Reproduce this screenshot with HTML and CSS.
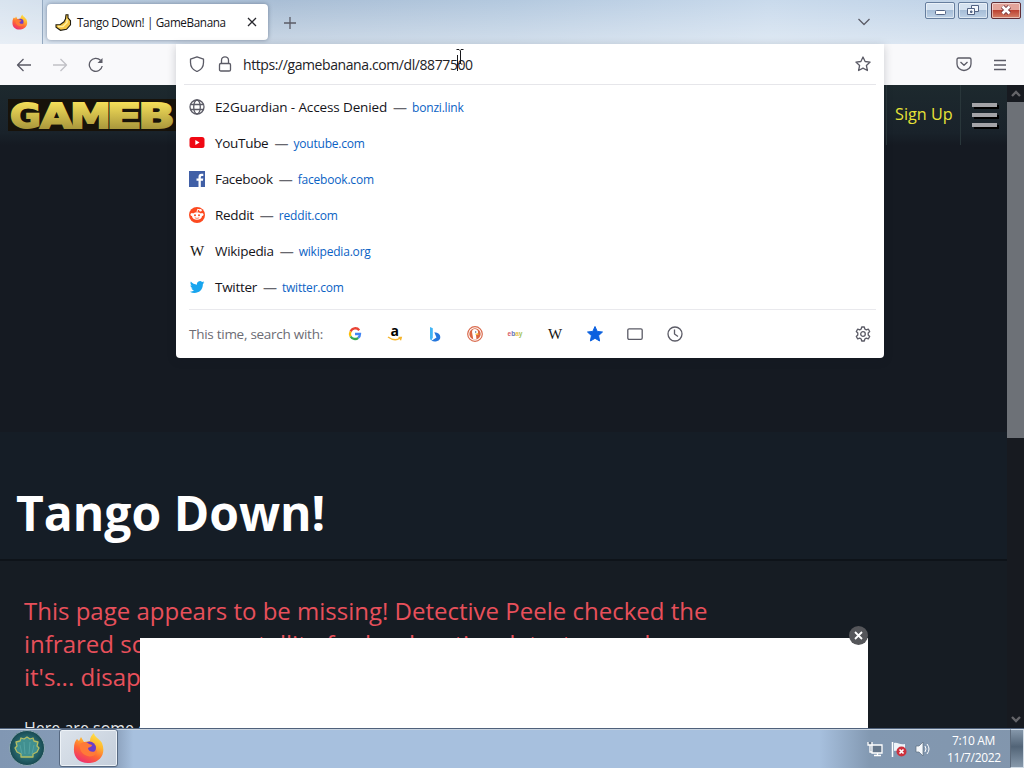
FILE: index.html
```
<!DOCTYPE html>
<html lang="en">
  <head>
    <meta charset="utf-8">
    <title>Tango Down! | GameBanana</title>
    <link rel="stylesheet" href="styles.css">
  </head>
  <body>
    <div class="screen">
      <div class="tabbar">
        <div class="pinned">
          <svg width="16" height="16" viewBox="0 0 32 32"><use href="#firefox"/></svg>
        </div>
        <div class="tab">
          <svg class="favicon" width="17" height="17" viewBox="0 0 17 17">
            <path d="M11 .8h2v3l2.500 3v4l-4 4.500-6 1-4.500-3v-2.500h4l4-3 1.500-3z" fill="#f6c643" stroke="#201c10" stroke-width="1.1"/>
            <path d="M3 12.500h5l4-4V5" fill="none" stroke="#fff0a0" stroke-width="1.5"/>
          </svg>
          <span class="tab-title">Tango Down! | GameBanana</span>
          <svg width="10" height="10" viewBox="0 0 10 10" class="line tab-x"><path d="M1 1l8 8M9 1l-8 8"/></svg>
        </div>
        <svg class="line new-tab" width="12" height="12" viewBox="0 0 12 12"><path d="M6 0v12M0 6h12"/></svg>
        <svg class="line tab-list" width="12" height="8" viewBox="0 0 12 8"><path d="M.5 1L6 6.500 11.500 1"/></svg>
        <div class="window-buttons">
          <div class="win-btn">
            <svg width="30" height="16" viewBox="0 0 30 16"><rect x="10.500" y="8.500" width="10" height="4" rx="1" fill="#fff" stroke="#536383"/></svg>
          </div>
          <div class="win-btn">
            <svg width="30" height="16" viewBox="0 0 30 16" fill="#f5f8fc" stroke="#536383">
              <path d="M13.500 3.500h7v6h-7z"/><path d="M9.500 6.500h7v6h-7z"/><path d="M12.500 9h1.500v1.500h-1.500z" fill="#7d94b5"/>
            </svg>
          </div>
          <div class="win-btn win-close">
            <svg width="30" height="16" viewBox="0 0 30 16" fill="none">
              <path d="M11.500 4.500l7 7M18.500 4.500l-7 7" stroke="#713239" stroke-width="4.500"/>
              <path d="M11.500 4.500l7 7M18.500 4.500l-7 7" stroke="#fff" stroke-width="2.700"/>
            </svg>
          </div>
        </div>
      </div>

      <div class="toolbar">
        <svg class="line" width="16" height="16" viewBox="0 0 16 16"><path d="M15 8H1.500M7.500 2l-6 6 6 6"/></svg>
        <svg class="line faded" width="16" height="16" viewBox="0 0 16 16"><path d="M1 8h13.500M8.500 2l6 6-6 6"/></svg>
        <svg class="line" width="16" height="16" viewBox="0 0 16 16"><path d="M14.200 9A6.500 6.500 0 1 1 12.500 3.300"/><path d="M14.500 1v5h-5z" fill="#5b5b66" stroke="none"/></svg>
        <svg class="line pocket" width="16" height="16" viewBox="0 0 16 16"><path d="M2.500 2h11Q15 2 15 3.500V8a7 6.500 0 0 1-14 0V3.500Q1 2 2.500 2zM4.500 6L8 9.300 11.500 6"/></svg>
        <svg class="line" width="14" height="14" viewBox="0 0 14 14"><path d="M1 2.500h12M1 7h12M1 11.500h12"/></svg>
      </div>

      <div class="page">
        <div class="content">
          <div class="site-nav">
            <svg class="logo" width="168" height="34" viewBox="0 0 168 34">
              <defs>
                <linearGradient id="gold" gradientUnits="userSpaceOnUse" x1="0" y1="3" x2="0" y2="30">
                  <stop offset="0" stop-color="#f5df59"/><stop offset="1" stop-color="#a9973c"/>
                </linearGradient>
              </defs>
              <rect width="168" height="32" fill="#17120a"/>
              <text x="2" y="28.500" textLength="31" lengthAdjust="spacingAndGlyphs">G</text>
              <text x="32" y="28.500" textLength="33" lengthAdjust="spacingAndGlyphs">A</text>
              <text x="62" y="28.500" textLength="41" lengthAdjust="spacingAndGlyphs">M</text>
              <text x="98" y="28.500" textLength="36" lengthAdjust="spacingAndGlyphs">E</text>
              <text x="130" y="28.500" textLength="37" lengthAdjust="spacingAndGlyphs">B</text>
            </svg>
            <div class="sign-up">Sign Up</div>
            <div class="nav-menu"><i></i><i></i><i></i></div>
          </div>
          <div class="banner"></div>
          <div class="heading"><h1>Tango Down!</h1></div>
          <div class="message">
            <p class="missing">This page appears to be missing! Detective Peele checked the<br>infrared scanners, satellite for her locative detector, and<br>it's... disappeared.</p>
            <p class="suggest">Here are some other</p>
          </div>
        </div>
        <div class="scrollbar">
          <svg width="10" height="17" viewBox="0 0 10 17"><path d="M1 11l4-4 4 4"/></svg>
          <div class="thumb"></div>
          <svg width="10" height="17" viewBox="0 0 10 17"><path d="M1 6l4 4 4-4"/></svg>
        </div>
      </div>

      <div class="taskbar">
        <svg class="start" width="38" height="38" viewBox="0 0 38 38">
          <circle cx="19" cy="19" r="17.500" fill="url(#orb)" stroke="#8fa9b4"/>
          <path d="M13 28h12v-3l4-2 2-4-2-2 1-4-4-1-1-3-3 1-3-2-3 2-3-1-1 3-4 1 1 4-2 2 2 4 4 2z" fill="#419090" stroke="#b5bd62" stroke-width="1.300" stroke-linejoin="round"/>
          <path d="M14 25l-2-9M17 25l-1-12M21 25l1-12M24 25l2-9" stroke="#55a3a2" fill="none"/>
        </svg>
        <div class="task">
          <svg width="32" height="32" viewBox="0 0 32 32"><use href="#firefox"/></svg>
        </div>
        <div class="tray">
          <svg width="16" height="16" viewBox="0 0 16 16" fill="#66788c" stroke="#fff" stroke-width="1.300">
            <path d="M5 4h10v8H5zM7 14.500h7M10.500 12v2M1 1v3h4V1M3 4v7h2" />
          </svg>
          <svg width="16" height="16" viewBox="0 0 16 16">
            <path d="M1.500 1v15" stroke="#fff" stroke-width="1.500"/><path d="M3 2c4-1 5 2 11 1v8c-5 1-7-2-11-1z" fill="#eef3f8"/>
            <circle cx="10.500" cy="10.500" r="5" fill="#cd303c"/><path d="M8.500 8.500l4 4M12.500 8.500l-4 4" stroke="#fff" stroke-width="1.700"/>
          </svg>
          <svg width="16" height="16" viewBox="0 0 16 16" fill="none" stroke="#fff">
            <path d="M1 5h3l4-4v14l-4-4H1z" fill="#f4f7fa" stroke="#5d6d80" stroke-width=".7"/><path d="M10 5q2 3 0 6M12 3q4 5 0 10"/>
          </svg>
        </div>
        <div class="clock"><span>7:10 AM</span><span>11/7/2022</span></div>
        <div class="show-desktop"></div>
      </div>

      <div class="ad">
        <div class="ad-close"><svg width="9" height="9" viewBox="0 0 9 9"><path d="M1 1l7 7M8 1L1 8" stroke="#fff" stroke-width="1.800"/></svg></div>
      </div>

      <div class="urlbar">
        <div class="url-input">
          <svg class="line" width="16" height="16" viewBox="0 0 16 16"><path d="M8 .8l6.500 2.400v3.300C14.500 11 12 14 8 15.500 4 14 1.500 11 1.500 6.500V3.200z"/></svg>
          <svg class="line" width="16" height="16" viewBox="0 0 16 16"><rect x="2.500" y="7.500" width="11" height="7.500" rx="1.300"/><path d="M4.500 7.500V4.300a3.500 3.500 0 0 1 7 0v3.200"/></svg>
          <span class="url">https://gamebanana.com/dl/8877500</span>
          <svg class="line" width="16" height="16" viewBox="0 0 16 16"><path d="M8 1l2.100 4.500 5 .6-3.700 3.400 1 5L8 12.100l-4.400 2.400 1-5L.9 6.100l5-.6z"/></svg>
        </div>
        <div class="results">
          <div class="result">
            <svg class="line" width="16" height="16" viewBox="0 0 16 16"><circle cx="8" cy="8" r="7"/><ellipse cx="8" cy="8" rx="3.300" ry="7"/><path d="M1.500 5.500h13M1.500 10.500h13"/></svg>
            <span class="name wide">E2Guardian - Access Denied</span><span class="dash">—</span><span class="link">bonzi.link</span>
          </div>
          <div class="result">
            <svg width="16" height="16" viewBox="0 0 16 16"><rect x=".5" y="2" width="15" height="11" rx="2.500" fill="#f00813"/><path d="M6.300 5v5l4.200-2.500z" fill="#fff"/></svg>
            <span class="name">YouTube</span><span class="dash">—</span><span class="link">youtube.com</span>
          </div>
          <div class="result">
            <svg width="16" height="16" viewBox="0 0 16 16"><path d="M0 0h16v16H0z" fill="#405fa6"/><path d="M9.500 16V9.800h-2V7.500h2V6q0-3.200 3-3.200h1.800V5H13q-1.200 0-1.200 1.200v1.300h2.500l-.4 2.300h-2.100V16z" fill="#fff"/></svg>
            <span class="name">Facebook</span><span class="dash">—</span><span class="link">facebook.com</span>
          </div>
          <div class="result">
            <svg width="16" height="16" viewBox="0 0 16 16"><circle cx="8" cy="8" r="8" fill="#fc4a20"/><path d="M8 5l.6-2.700 2.400.6" fill="none" stroke="#fff"/><circle cx="11.500" cy="3.200" r="1.200" fill="#fff"/><circle cx="3" cy="7.500" r="1.500" fill="#fff"/><circle cx="13" cy="7.500" r="1.500" fill="#fff"/><ellipse cx="8" cy="9" rx="5" ry="3.800" fill="#fff"/><circle cx="6" cy="8.300" r="1" fill="#fc4a20"/><circle cx="10" cy="8.300" r="1" fill="#fc4a20"/><path d="M5.800 10.800q2.200 1.200 4.400 0" fill="none" stroke="#fc4a20" stroke-width=".7"/></svg>
            <span class="name">Reddit</span><span class="dash">—</span><span class="link">reddit.com</span>
          </div>
          <div class="result">
            <span class="wiki">W</span>
            <span class="name">Wikipedia</span><span class="dash">—</span><span class="link">wikipedia.org</span>
          </div>
          <div class="result">
            <svg width="16" height="16" viewBox="0 0 24 24"><path fill="#18a5ee" d="M23 5c-.8.4-1.600.6-2.500.7.9-.6 1.600-1.400 1.900-2.400-.8.5-1.800.9-2.800 1.100A4.500 4.500 0 0 0 12 8.500C8.200 8.300 5 6.500 2.800 3.800c-1.100 2-.6 4.600 1.400 6-.7 0-1.400-.2-2-.5 0 2.200 1.500 4.100 3.500 4.500-.6.200-1.300.2-2 .1.600 1.800 2.200 3.100 4.200 3.100A9 9 0 0 1 1.200 19c9 5.300 20.100-.5 19.600-11.400C21.700 6.900 22.400 6 23 5z"/></svg>
            <span class="name">Twitter</span><span class="dash">—</span><span class="link">twitter.com</span>
          </div>
        </div>
        <div class="engines">
          <span class="engines-label">This time, search with:</span>
          <div class="engine-icons">
            <svg width="16" height="16" viewBox="0 0 16 16" fill="none" stroke-width="2.300"><path d="M12.200 4.200A5 5 0 0 0 3.600 5.500" stroke="#e94335"/><path d="M3.600 5.500a5 5 0 0 0 0 5" stroke="#fbbc05"/><path d="M3.600 10.500a5 5 0 0 0 7.600 1.300" stroke="#34a853"/><path d="M11.200 11.800Q13 10.500 13 8H8" stroke="#4285f4"/></svg>
            <svg width="16" height="16" viewBox="0 0 16 16"><text class="amazon-a" x="3.500" y="9.500">a</text><path d="M1 11q7 5 12 1M11.500 11.500h2.700l-.8 2.700" fill="none" stroke="#f5b52d" stroke-width="1.500"/></svg>
            <svg width="16" height="16" viewBox="0 0 16 16"><path d="M3 1l2.800 1.200v9L4.500 14.500Q3 14 3 12z" fill="#42b5f5"/><path d="M4.500 14.800l5-3.300-2.200-5.200q6 .8 6 4.700 0 3-3 4-3 1.200-5.800-.2z" fill="#2677dc"/></svg>
            <svg width="16" height="16" viewBox="0 0 16 16"><circle cx="8" cy="8" r="7.300" fill="#fff" stroke="#d96b4e" stroke-width="1.200"/><circle cx="8" cy="8" r="5.700" fill="#db6541"/><path d="M6.300 13.500L5 6q0-3 3-3 3.500.5 3 4l-2 2 .5 4.500z" fill="#fff"/><circle cx="8.700" cy="6" r=".7" fill="#36506b"/><path d="M8.500 8.200h3" stroke="#f8c538" stroke-width="1.300"/></svg>
            <svg class="ebay" width="16" height="16" viewBox="0 0 16 16"><text x=".5" y="9.500" textLength="15" lengthAdjust="spacingAndGlyphs"><tspan fill="#d85b63">e</tspan><tspan fill="#6272b7">b</tspan><tspan fill="#e9bf4e">a</tspan><tspan fill="#a3c356">y</tspan></text></svg>
            <span class="wiki">W</span>
            <svg width="16" height="16" viewBox="0 0 16 16"><path d="M8 .5l2.200 4.900 5.300.6-3.900 3.600 1 5.400L8 12.300 3.400 15l1-5.400L.5 6l5.300-.6z" fill="#0b60df" stroke="#0b60df" stroke-linejoin="round"/></svg>
            <svg class="line" width="16" height="16" viewBox="0 0 16 16"><rect x=".8" y="2.800" width="14.400" height="10.500" rx="1.300"/></svg>
            <svg class="line" width="16" height="16" viewBox="0 0 16 16"><circle cx="8" cy="8" r="7"/><path d="M7.500 3.500V8l3.500 2.500"/></svg>
          </div>
          <svg class="line gear" width="16" height="16" viewBox="0 0 16 16"><circle cx="8" cy="8" r="2.300"/><path d="M6.700 1h2.600l.5 2 1.500.9 2-.7 1.400 2.300-1.500 1.500v2l1.500 1.500-1.400 2.300-2-.7-1.500.9-.5 2H6.700l-.5-2-1.500-.9-2 .7-1.400-2.300L2.800 9V7L1.300 5.500l1.400-2.300 2 .7 1.500-.9z"/></svg>
        </div>
      </div>

      <svg class="cursor" width="10" height="24" viewBox="0 0 10 24"><path d="M1.500 1.500H4l1 1 1-1h2.500M5.500 2.500v13M2.500 16H4l1-1 1 1h1.500M2.500 7v16"/></svg>
    </div>

    <svg class="defs" width="0" height="0">
      <defs>
        <radialGradient id="orb"><stop offset="0" stop-color="#438e91"/><stop offset=".6" stop-color="#28686f"/><stop offset="1" stop-color="#174850"/></radialGradient>
        <linearGradient id="flame" x1=".8" y1="0" x2=".3" y2="1"><stop offset="0" stop-color="#ffe94b"/><stop offset=".35" stop-color="#ffb52e"/><stop offset=".65" stop-color="#ff6634"/><stop offset="1" stop-color="#ed2e72"/></linearGradient>
        <symbol id="firefox" viewBox="0 0 32 32">
          <path d="M4 7l2 2 2-4 3 5 6-1c0-4 2-6 4-8 0 4 5 5 8 10 4 10-1 19-12 20C7 32 0 26 1 16c0-4 1-7 3-9z" fill="url(#flame)"/>
          <circle cx="16.500" cy="16" r="6.500" fill="#6c3ec8"/>
          <path d="M7 12c4-3 7-2 9 0l3 1c0 2-3 2-4 3 0 4 6 5 9 2 0 6-7 8-12 5-4-2-6-7-5-11z" fill="#ff7a38"/>
        </symbol>
      </defs>
    </svg>
  </body>
</html>
```
FILE: styles.css
```
* {
  box-sizing: border-box;
}
body {
  margin: 0;
  overflow: hidden;
  font-family: "Open Sans", "Noto Sans", sans-serif;
}
svg {
  display: block;
  flex: none;
}
.screen {
  position: relative;
  display: flex;
  flex-direction: column;
  width: 1024px;
  height: 768px;
  overflow: hidden;
}
.line {
  fill: none;
  stroke: #5b5b66;
  stroke-width: 1.3;
  stroke-linejoin: round;
}
.faded {
  opacity: 0.35;
}
.defs {
  position: absolute;
}

/* Tabs */
.tabbar {
  display: flex;
  height: 44px;
  background: linear-gradient(rgba(255, 255, 255, 0), rgba(255, 255, 255, 0.4)), linear-gradient(90deg, #c8d8e9, #a9bed5 27%, #b4c9df 50%, #c9daec 75%, #bed1e6);
}
.pinned {
  width: 43px;
  padding: 14px 0 0 12px;
  border-right: 1px solid #94a9c0;
  background: rgba(255, 255, 255, 0.3);
}
.tab {
  display: flex;
  align-items: center;
  width: 221px;
  height: 36px;
  margin: 4px 0 0 4px;
  padding: 0 11px 0 8px;
  border-radius: 4px;
  background: #fff;
  box-shadow: 0 0 4px rgba(60, 75, 100, 0.55);
}
.tab-title {
  flex: 1;
  margin-left: 5px;
  font-size: 11.7px;
  letter-spacing: -0.37px;
  white-space: nowrap;
  color: #15141a;
}
.tab-x {
  stroke: #27272d;
}
.new-tab {
  margin: 17px 0 0 16px;
}
.tab-list {
  margin: 18px 55px 0 auto;
}
.window-buttons {
  display: flex;
  gap: 3px;
  padding: 2px 3px 0 0;
}
.win-btn {
  width: 30px;
  height: 17px;
  overflow: hidden;
  border: 1px solid #667e9e;
  border-radius: 2px;
  box-shadow: inset 0 0 0 1px rgba(255, 255, 255, 0.5);
  background: linear-gradient(#d5e2f0 45%, #a6bdd7 50%, #bdd1e6);
}
.win-btn svg {
  margin: -1px;
}
.win-close {
  border-color: #612d35;
  background: linear-gradient(#e3a49a 45%, #bd4332 50%, #d58168);
}

/* Navigation toolbar */
.toolbar {
  display: flex;
  align-items: center;
  gap: 20px;
  height: 41px;
  padding: 0 17px 0 16px;
  background: #f9f9fb;
}
.pocket {
  margin: -2px 1px 0 auto;
}

/* Web page */
.page {
  display: flex;
  height: 643px;
  background: #151a22;
}
.content {
  display: flex;
  flex: 1;
  flex-direction: column;
  min-width: 0;
}
.site-nav {
  display: flex;
  flex: none;
  height: 60px;
  background: linear-gradient(#1d292e, #19222a 80%, #151a22);
}
.logo {
  margin: 14px auto 0 8px;
}
.logo text {
  font: bold 34px "DejaVu Sans", sans-serif;
  fill: url(#gold);
  stroke: url(#gold);
  stroke-width: 1.8;
}
.sign-up {
  width: 75px;
  padding: 18px 0 0 8px;
  border-left: 1px solid #29363a;
  border-right: 1px solid #29363a;
  font-size: 16.2px;
  white-space: nowrap;
  color: #e8e337;
}
.nav-menu {
  width: 46px;
  padding: 18px 10px 0 11px;
}
.nav-menu i {
  display: block;
  height: 4px;
  margin-bottom: 6px;
  background: #a3a3a7;
  box-shadow: 2px 2px 0 #000;
}
.banner {
  flex: none;
  height: 287px;
}
.heading {
  flex: none;
  height: 129px;
  padding: 46px 16px 0;
  border-bottom: 2px solid #0e1319;
  background: #151d26;
}
h1 {
  margin: 0;
  font-size: 48px;
  line-height: 70px;
  color: #fff;
}
.message {
  height: 167px;
  padding: 33px 24px 0;
  overflow: hidden;
  background: #161c23;
}
.missing {
  margin: 0;
  font-size: 24px;
  line-height: 33px;
  white-space: nowrap;
  color: #e8505b;
}
.suggest {
  margin: 24px 0 0;
  font-size: 16px;
  line-height: 22px;
  color: #e7e9eb;
}
.scrollbar {
  display: flex;
  flex-direction: column;
  width: 17px;
  align-items: center;
  background: #171a20;
}
.scrollbar svg {
  fill: none;
  stroke: #656569;
  stroke-width: 2.3;
}
.thumb {
  width: 17px;
  height: 336px;
  margin-bottom: auto;
  background: #6d7177;
}

/* Sticky ad */
.ad {
  position: absolute;
  left: 140px;
  top: 638px;
  width: 728px;
  height: 90px;
  background: #fff;
}
.ad-close {
  position: absolute;
  right: 0;
  top: -12px;
  display: grid;
  place-items: center;
  width: 19px;
  height: 19px;
  border-radius: 50%;
  background: #55565a;
}

/* Address bar dropdown */
.urlbar {
  position: absolute;
  left: 176px;
  top: 44px;
  width: 708px;
  height: 314px;
  border-radius: 0 0 4px 4px;
  background: #fff;
  box-shadow: 0 2px 10px rgba(20, 25, 35, 0.2);
}
.url-input {
  display: flex;
  align-items: center;
  gap: 12px;
  height: 41px;
  margin: 0 8px;
  padding: 0 5px;
  border-bottom: 1px solid #e6e6ea;
}
.url {
  flex: 1;
  margin-left: -2px;
  font-size: 14px;
  letter-spacing: -0.41px;
  color: #222226;
}
.results {
  padding: 4px 13px;
}
.result {
  display: flex;
  align-items: center;
  height: 36px;
  white-space: nowrap;
}
.name {
  margin-left: 10px;
  font-size: 13.5px;
  letter-spacing: -0.3px;
  color: #15141a;
}
.name.wide {
  letter-spacing: -0.13px;
}
.dash {
  margin: 0 5px 0 6px;
  font-size: 14px;
  color: #66666d;
}
.link {
  font-size: 12px;
  letter-spacing: -0.2px;
  color: #0b62c4;
}
.wiki {
  width: 16px;
  font: 15px "Liberation Serif", serif;
  text-align: center;
  color: #151515;
}
.engines {
  display: flex;
  align-items: center;
  height: 49px;
  margin: 0 8px 0 13px;
  padding-right: 5px;
  border-top: 1px solid #e9e9ed;
}
.engines-label {
  width: 158px;
  font-size: 13.5px;
  letter-spacing: -0.27px;
  white-space: nowrap;
  color: #6c6c74;
}
.engine-icons {
  display: flex;
  align-items: center;
  gap: 24px;
}
.amazon-a {
  font: bold 14px "Open Sans", sans-serif;
}
.ebay text {
  font: bold 7px "Liberation Sans", sans-serif;
}
.gear {
  margin-left: auto;
}
.cursor {
  position: absolute;
  left: 455px;
  top: 48px;
  fill: none;
  stroke: #17171a;
}

/* Windows taskbar */
.taskbar {
  display: flex;
  height: 40px;
  border-top: 1px solid #4f617b;
  box-shadow: inset 0 1px #c8d4e1;
  background: linear-gradient(90deg, #8197b3, #879cb7 11%, #a7c0de 13%, #a7c0de 80%, #8298b1 85%, #8296ad);
}
.start {
  margin: 0 13px 0 8px;
}
.task {
  display: grid;
  place-items: center;
  width: 59px;
  height: 38px;
  border: 1px solid #576981;
  border-radius: 3px;
  background: linear-gradient(135deg, #dce3eb, #c4cedb);
  box-shadow: inset 0 0 0 1px #edf2f7;
}
.tray {
  display: flex;
  gap: 8px;
  margin-left: auto;
  padding: 12px 16px 0 0;
}
.clock {
  display: flex;
  flex-direction: column;
  width: 53px;
  margin-right: 10px;
  padding-top: 3px;
  font-size: 12px;
  line-height: 17px;
  letter-spacing: -0.35px;
  text-align: center;
  white-space: nowrap;
  color: #fff;
}
.show-desktop {
  width: 14px;
  border: 1px solid #d0dbe5;
  border-left-color: #5d6b7c;
  background: linear-gradient(#8597aa, #526477 45%, #8799ab);
}
```
